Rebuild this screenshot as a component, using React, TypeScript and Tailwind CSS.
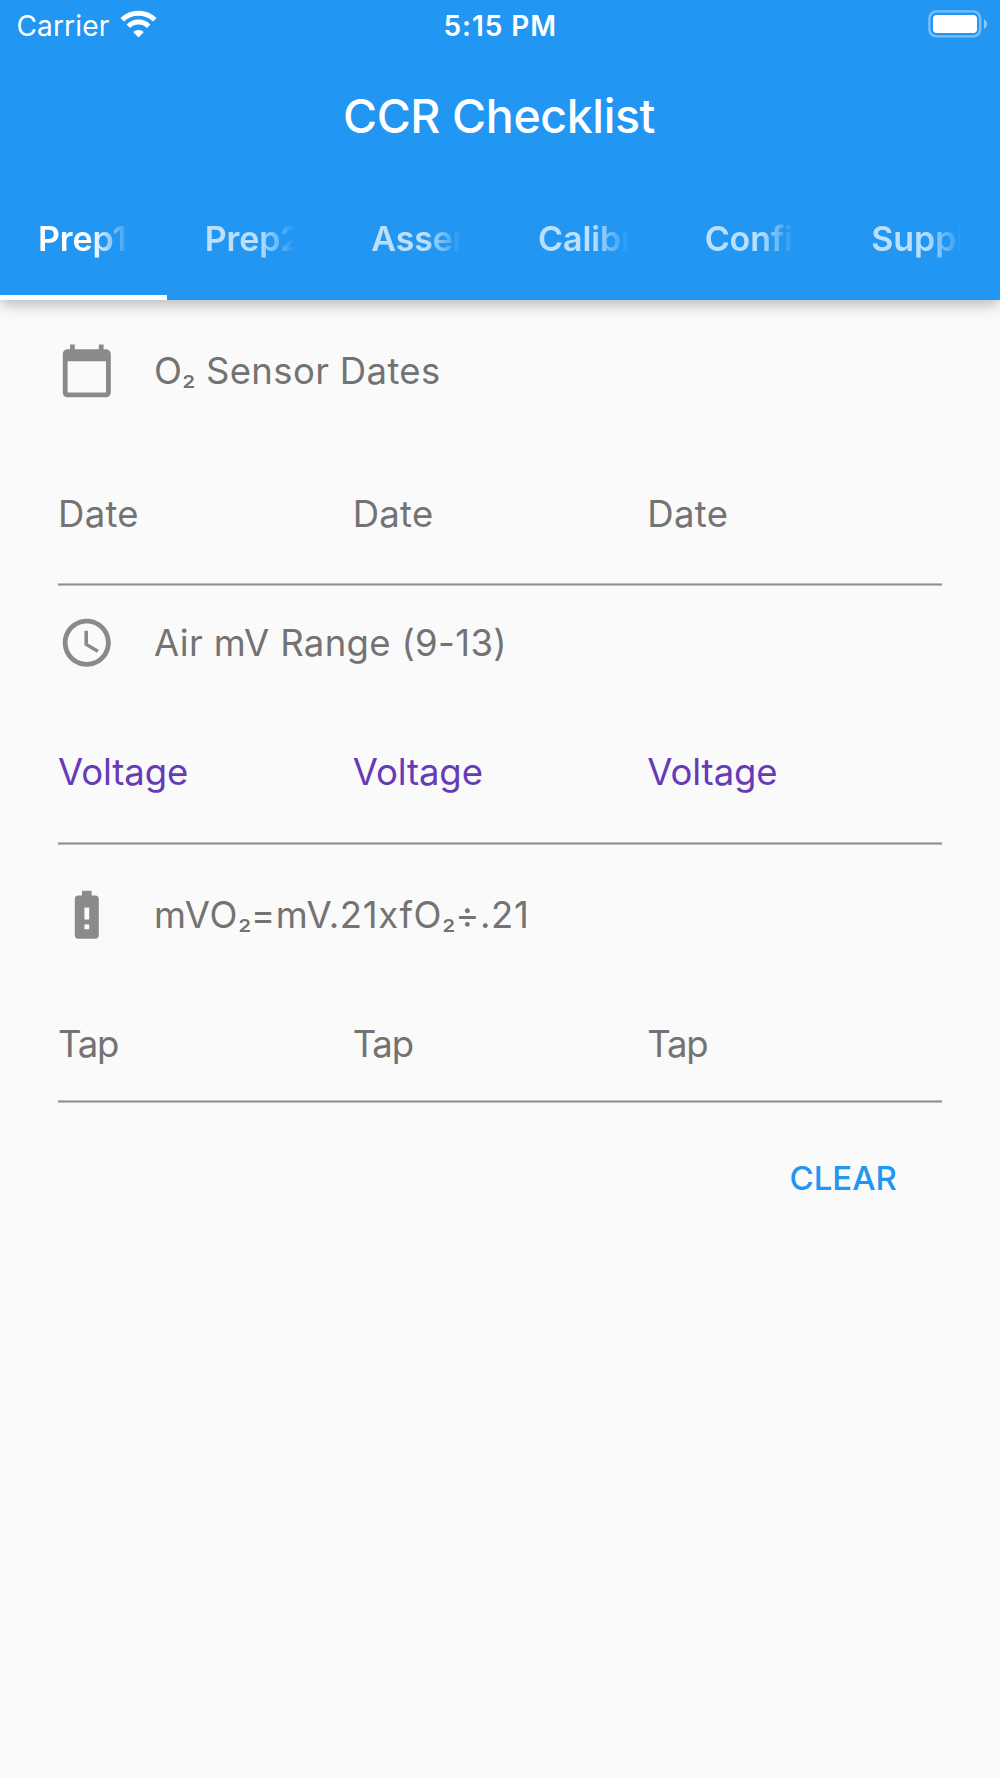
import React from "react";

const ICONS = {
  calendar:
    "M20 3h-1V1h-2v2H7V1H5v2H4c-1.1 0-2 .9-2 2v16c0 1.1.9 2 2 2h16c1.1 0 2-.9 2-2V5c0-1.1-.9-2-2-2zm0 18H4V8h16v13z",
  clock:
    "M11.99 2C6.47 2 2 6.48 2 12s4.47 10 9.99 10C17.52 22 22 17.52 22 12S17.52 2 11.99 2zM12 20c-4.42 0-8-3.58-8-8s3.58-8 8-8 8 3.58 8 8-3.58 8-8 8zm.5-13H11v6l5.25 3.15.75-1.23-4.5-2.67z",
  battery:
    "M15.67 4H14V2h-4v2H8.33C7.6 4 7 4.6 7 5.33v15.33C7 21.4 7.6 22 8.33 22h7.33c.74 0 1.34-.6 1.34-1.33V5.33C17 4.6 16.4 4 15.67 4zM13 18h-2v-2h2v2zm0-4h-2V9h2v5z",
};

function StatusBar() {
  return (
    <div className="flex h-[51px] items-center justify-between pl-[16.5px] pr-[13px]">
      <div className="flex flex-1 items-center gap-[11px]">
        <span className="text-[28px] leading-none tracking-[0.15px]">Carrier</span>
        <svg className="mb-[3px] h-[28px] w-[37px]" viewBox="0 0 37 28" fill="none" stroke="white">
          <path d="M2.2 9.8a23.3 23.3 0 0 1 32.6 0" strokeWidth="5" />
          <path d="M8.3 16.2a14.6 14.6 0 0 1 20.4 0" strokeWidth="5" />
          <path d="M18.5 27.5l-5.3-5.4a7.6 7.6 0 0 1 10.6 0z" fill="white" stroke="none" />
        </svg>
      </div>
      <span className="mr-[3px] text-[28px] font-semibold leading-none tracking-[0.95px]">5:15 PM</span>
      <div className="flex flex-1 justify-end">
        <svg className="mb-[3px] h-[28px] w-[59px]" viewBox="0 0 59 28">
          <rect x="1.4" y="1.4" width="50.7" height="25" rx="7" fill="none" stroke="white" strokeOpacity=".4" strokeWidth="2.4" />
          <rect x="5" y="5" width="44" height="18" rx="3.8" fill="white" />
          <path d="M56 9.2q3 1.6 3 4.8t-3 4.8z" fill="white" fillOpacity=".5" />
        </svg>
      </div>
    </div>
  );
}

const TABS = ["Prep1", "Prep2", "Assem", "Calibr", "Confir", "Suppl"];

function Tabs() {
  return (
    <div className="grid h-[120px] grid-cols-6">
      {TABS.map((t, i) => (
        <div
          key={t}
          className={
            i === 0
              ? "flex items-center border-b-[5px] border-white px-[38px] pt-[2px]"
              : "flex items-center border-b-[5px] border-transparent px-[38px] pt-[2px] text-white/70"
          }
        >
          <span className="w-full overflow-hidden whitespace-nowrap text-[34px] font-[560] leading-[46px] tracking-[-0.1px] [mask-image:linear-gradient(to_right,black_60%,transparent)]">
            {t}
          </span>
        </div>
      ))}
    </div>
  );
}

function Sub2() {
  return <span className="inline-block w-[13px] origin-[0%_70%] scale-[.85]">₂</span>;
}

function Heading({ icon, className, children }: { icon: keyof typeof ICONS; className: string; children: React.ReactNode }) {
  return (
    <div className={`flex items-center ${className}`}>
      <svg className="h-[57.6px] w-[57.6px] fill-[#8a8a8a]" viewBox="0 0 24 24">
        <path d={ICONS[icon]} />
      </svg>
      <span className="ml-[38.5px] whitespace-nowrap">{children}</span>
    </div>
  );
}

function Cells({ label, className }: { label: string; className: string }) {
  return (
    <>
      <div className={`grid grid-cols-3 items-center ${className}`}>
        {[0, 1, 2].map((i) => (
          <span key={i}>{label}</span>
        ))}
      </div>
      <div className="h-[3px] border-y border-[#bdbdbd] bg-[#8f8f8f]" />
    </>
  );
}

export default function App() {
  return (
    <div className="h-[1778px] w-[1000px] overflow-hidden bg-[#fafafa] font-['Inter',sans-serif]">
      <header className="bg-[#2196f3] text-white shadow-[0_4px_14px_rgba(0,0,0,0.28)]">
        <StatusBar />
        <h1 className="flex h-[129px] items-center justify-center pr-[2px] pt-[2px] text-[46.5px] font-[530] tracking-[-0.4px]">CCR Checklist</h1>
        <Tabs />
      </header>
      <main className="px-[58px] text-[36.5px] font-[370] leading-[46px] text-[#737373]">
        <Heading icon="calendar" className="h-[142px] tracking-[0.35px]">
          O<Sub2 /> Sensor Dates
        </Heading>
        <Cells label="Date" className="h-[141px] pt-[3px] tracking-[0.3px]" />
        <Heading icon="clock" className="h-[114px] tracking-[0.33px]">Air mV Range (9-13)</Heading>
        <Cells label="Voltage" className="h-[142px] pt-[2px] tracking-[-0.1px] text-[#673ab7]" />
        <Heading icon="battery" className="h-[139px] tracking-[0.62px]">
          mVO<Sub2 />=mV.21xfO<Sub2 />÷.21
        </Heading>
        <Cells label="Tap" className="h-[116px] pt-[4px] tracking-[-1.2px]" />
        <div className="flex justify-end pr-[45px] pt-[52px]">
          <button className="text-[33px] font-medium text-[#2196f3]">CLEAR</button>
        </div>
      </main>
    </div>
  );
}
